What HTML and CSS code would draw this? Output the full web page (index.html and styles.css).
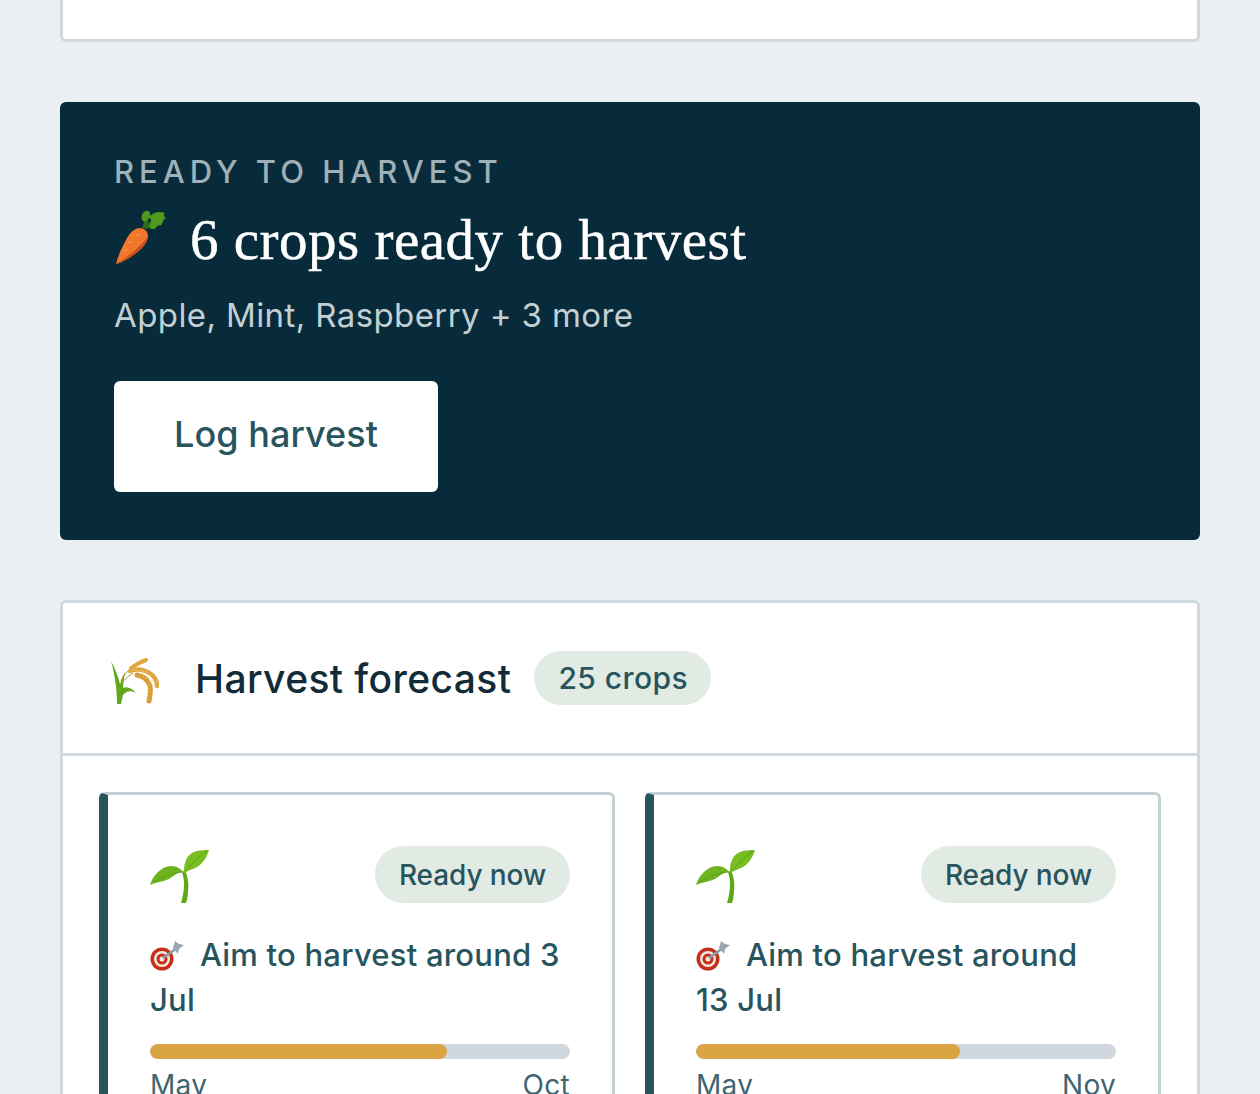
FILE: index.html
```html
<!DOCTYPE html>
<html lang="en">
<head>
  <meta charset="UTF-8" />
  <meta name="viewport" content="width=device-width, initial-scale=1.0" />
  <title>Harvest</title>
  <link rel="stylesheet" href="styles.css">
</head>
<body>
  <svg class="defs" width="0" height="0" aria-hidden="true">
    <defs>
      <symbol id="sprout" viewBox="0 0 60 56">
        <path d="M32 24 L35 22 C38 29 39 37 38 43 C38 48 37 52 36 55 L31 55 C33 48 34 42 34 36 C34 31 33 27 32 24 Z" fill="#5fa815"/>
        <path d="M0 37 C3 27 12 18 21 18 C27 18 31 21 33 24 C27 24 24 28 19 31 C13 34 6 34 0 37 Z" fill="#6fb41f"/>
        <path d="M34 23 C34 14 37 8 42 5 C47 2 54 2 59 2 C57 9 53 15 47 19 C42 22 37 22 34 26 Z" fill="#78bd22"/>
        <path d="M4 34 C12 29 22 25 32 24 M36 23 C41 17 48 9 57 3" fill="none" stroke="#569a12" stroke-width="0.8"/>
      </symbol>
      <symbol id="target" viewBox="0 0 34 30">
        <circle cx="12" cy="18" r="11.500" fill="#c4301c"/>
        <circle cx="12" cy="18" r="8" fill="#f3e9df"/>
        <circle cx="12" cy="18" r="5.500" fill="#c4301c"/>
        <circle cx="12" cy="18" r="2.500" fill="#f3e9df"/>
        <path d="M13 17 L27 7" stroke="#8d9aa2" stroke-width="2.500"/>
        <path d="M25 0 L29 3 L34 4 L29 8 L28 13 L23 7 Z" fill="#9aa7ae"/>
      </symbol>
    </defs>
  </svg>

  <div class="page">
    <div class="card top-card"></div>

    <section class="harvest-banner">
      <p class="eyebrow">READY TO HARVEST</p>
      <h2 class="banner-title">
        <svg class="carrot" viewBox="0 0 52 56" aria-hidden="true">
          <path d="M2 54 C4 46 8 37 12 30 C15 24 19 19 25 18 C30 18 34 21 34 26 C34 31 30 36 26 40 C19 46 10 52 2 54 Z" fill="#f0772b"/>
          <path d="M2 54 C10 52 19 46 26 40 C30 36 34 31 34 26 C30 33 17 45 2 54 Z" fill="#c9501c"/>
          <path d="M14 33 L18 31 M10 41 L14 39 M22 26 L26 24" stroke="#f9a24e" stroke-width="1"/>
          <path d="M28 18 L31 9 L34 10 L33 19 Z" fill="#2f6b1a"/>
          <path d="M31 17 L36 11 L38 13 L34 19 Z" fill="#2f6b1a"/>
          <path d="M29 11 C26 8 28 2 32 1 C35 0 37 3 36 6 C40 2 45 1 51 3 C49 5 50 6 52 8 C49 9 50 11 48 13 C48 16 45 16 44 15 C42 20 37 20 35 17 C37 13 38 10 36 8 C34 9 33 10 33 12 Z" fill="#4f9a1c"/>
        </svg>
        <span>6 crops ready to harvest</span>
      </h2>
      <p class="banner-sub">Apple, Mint, Raspberry + 3 more</p>
      <button class="btn-log">Log harvest</button>
    </section>

    <section class="card forecast">
      <div class="forecast-head">
        <svg class="rice" viewBox="0 0 48 48" aria-hidden="true">
          <path d="M6 47 C6 34 4 18 0 4 C4 11 7 19 9 27 C11 22 12 18 14 15 C13 22 12 27 12 31 C16 29 21 31 25 36 C20 33 15 34 12 38 L10 47 Z" fill="#62a81c"/>
          <path d="M10 28 C12 24 16 20 22 16 M10 24 C12 19 16 14 21 11" fill="none" stroke="#a59a3a" stroke-width="1"/>
          <path d="M20 11 C24 8 29 5 35 3" fill="none" stroke="#dfa63f" stroke-width="4" stroke-linecap="round"/>
          <path d="M19 14 C27 11 34 13 40 17 C44 20 46 24 46 29" fill="none" stroke="#e0a840" stroke-width="4.500" stroke-linecap="round"/>
          <path d="M26 18 C32 19 37 23 39 29 C40 34 39 39 38 44" fill="none" stroke="#d99b34" stroke-width="5" stroke-linecap="round"/>
          <path d="M21 13 L37 15 M28 18 L45 26 M38 24 L38 42" fill="none" stroke="#f3cf80" stroke-width="0.8" stroke-dasharray="1.500 2"/>
        </svg>
        <h3 class="forecast-title">Harvest forecast</h3>
        <span class="pill pill-count">25 crops</span>
      </div>

      <div class="crop-grid">
        <article class="crop-card">
          <div class="crop-top">
            <svg class="sprout"><use href="#sprout"/></svg>
            <span class="pill pill-status">Ready now</span>
          </div>
          <p class="crop-aim"><svg class="target"><use href="#target"/></svg>Aim to harvest around 3 Jul</p>
          <div class="bar"><div class="bar-fill" style="width: 70.7%"></div></div>
          <div class="bar-labels"><span>May</span><span>Oct</span></div>
        </article>

        <article class="crop-card">
          <div class="crop-top">
            <svg class="sprout"><use href="#sprout"/></svg>
            <span class="pill pill-status">Ready now</span>
          </div>
          <p class="crop-aim"><svg class="target"><use href="#target"/></svg>Aim to harvest around 13 Jul</p>
          <div class="bar"><div class="bar-fill" style="width: 62.9%"></div></div>
          <div class="bar-labels"><span>May</span><span>Nov</span></div>
        </article>
      </div>
    </section>
  </div>
</body>
</html>
```

FILE: styles.css
```css
html, body {
  margin: 0;
  height: 1094px;
  overflow: hidden;
}
body {
  background-color: #eaeff2;
  font-family: "Inter", "Lato", sans-serif;
  color: #122b38;
}
.defs {
  position: absolute;
}
.page {
  padding: 0 60px;
}
.card {
  background-color: #fff;
  border: 3px solid #d1d9df;
  border-radius: 6px;
}
.top-card {
  height: 39px;
  border-top: none;
  border-top-left-radius: 0;
  border-top-right-radius: 0;
  margin-bottom: 60px;
}

.harvest-banner {
  height: 438px;
  box-sizing: border-box;
  padding: 54px;
  background-color: #082b3c;
  border-radius: 6px;
  margin-bottom: 60px;
}
.eyebrow {
  margin: 0;
  font-size: 31px;
  font-weight: 500;
  line-height: 32px;
  letter-spacing: 5px;
  color: #9fb0b6;
}
.banner-title {
  display: flex;
  align-items: center;
  gap: 24px;
  margin: 20px 0 0;
  height: 64px;
  font-family: "Liberation Serif", serif;
  font-weight: 400;
  font-size: 57px;
  line-height: 64px;
  letter-spacing: 0.5px;
  -webkit-text-stroke: 0.5px #fff;
  color: #fff;
}
.carrot {
  width: 52px;
  height: 56px;
  margin-top: -4px;
}
.banner-sub {
  margin: 21px 0 0;
  font-size: 33px;
  line-height: 44px;
  letter-spacing: 0.4px;
  color: #c3d0d3;
}
.btn-log {
  display: block;
  margin-top: 44px;
  padding-bottom: 6px;
  width: 324px;
  height: 111px;
  border: none;
  border-radius: 6px;
  background-color: #fff;
  font-family: inherit;
  font-size: 36px;
  font-weight: 500;
  letter-spacing: 0.05px;
  color: #28545e;
}

.forecast-head {
  display: flex;
  align-items: center;
  height: 150px;
  padding: 0 48px;
  border-bottom: 3px solid #d1d9df;
}
.rice {
  width: 48px;
  height: 48px;
  margin: 5px 36px 0 0;
}
.forecast-title {
  margin: 0 23px 0 0;
  font-size: 39px;
  font-weight: 500;
  letter-spacing: 0.4px;
  color: #122b38;
}
.pill {
  display: inline-flex;
  align-items: center;
  border-radius: 30px;
  background-color: #e1ebe4;
  color: #28545e;
  font-weight: 500;
}
.pill-count {
  height: 54px;
  padding: 0 23px 0 24px;
  font-size: 30px;
  letter-spacing: 0.45px;
}

.crop-grid {
  display: grid;
  grid-template-columns: 516px 516px;
  gap: 30px;
  padding: 36px;
}
.crop-card {
  box-sizing: border-box;
  height: 400px;
  padding: 51px 42px 0;
  background-color: #fff;
  border: 3px solid #c4d0d4;
  border-left: 9px solid #28545e;
  border-radius: 6px;
}
.crop-top {
  display: flex;
  justify-content: space-between;
  align-items: flex-start;
  height: 57px;
}
.sprout {
  width: 60px;
  height: 56px;
  margin-top: 2px;
}
.pill-status {
  height: 57px;
  padding: 0 24px;
  font-size: 28px;
  letter-spacing: -0.1px;
}
.crop-aim {
  margin: 29px 0 0;
  font-size: 31px;
  line-height: 45px;
  font-weight: 500;
  letter-spacing: 0.22px;
  color: #28545e;
}
.target {
  width: 34px;
  height: 30px;
  margin-right: 16px;
  vertical-align: -5px;
}
.bar {
  height: 15px;
  margin-top: 22px;
  border-radius: 8px;
  background-color: #d1d7de;
  overflow: hidden;
}
.bar-fill {
  height: 100%;
  background-color: #d9a441;
  border-radius: 8px;
}
.bar-labels {
  display: flex;
  justify-content: space-between;
  margin-top: 8px;
  font-size: 28px;
  line-height: 36px;
  letter-spacing: 0.3px;
  color: #3f6570;
}
```
